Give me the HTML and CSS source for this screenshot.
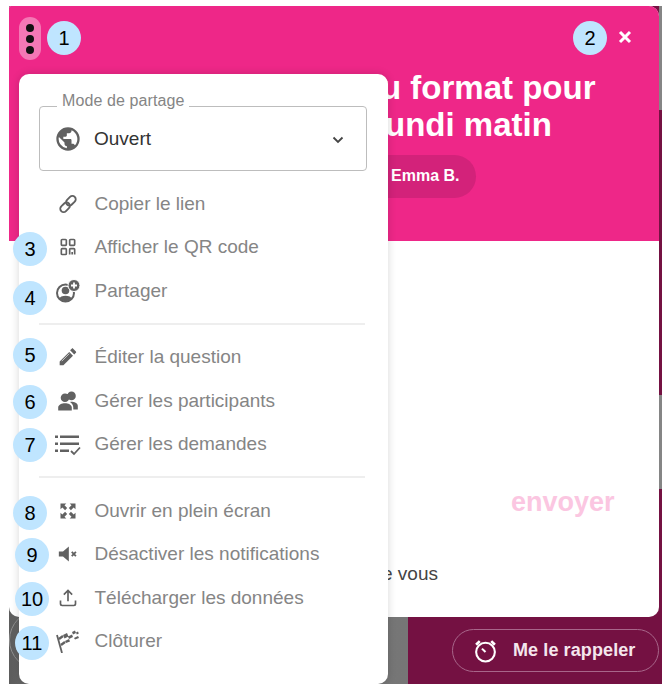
FILE: index.html
```html
<!DOCTYPE html>
<html lang="fr">
<head>
<meta charset="utf-8">
<title>Menu</title>
<link rel="stylesheet" href="styles.css">
</head>
<body>
<div class="stage">
  <div class="backdrop">
    <div class="bg-grey"><div class="ring"></div></div>
    <div class="bg-wine"></div>
    <div class="patch patch-a"></div>
    <div class="patch patch-b"></div>
  </div>
  <button class="remind">
    <svg class="remind-ic" viewBox="0 0 24 24" width="25" height="25"><circle cx="12" cy="13.500" r="9" fill="none" stroke="#fff" stroke-width="2"/><path d="M12 13.500 8.600 10.200" stroke="#fff" stroke-width="2"/><path d="M3 6.500 6.500 3M21 6.500 17.500 3" stroke="#fff" stroke-width="2.600"/></svg>
    Me le rappeler
  </button>

  <section class="card">
    <header class="card-head">
      <h1 class="title"><span class="title-line">u format pour</span><span class="title-line title-line-two">undi matin</span></h1>
      <div class="author">Emma B.</div>
      <svg class="close" viewBox="0 0 14 14" width="14" height="14"><path d="M2 2l10 10M12 2 2 12" stroke="#fff" stroke-width="3"/></svg>
    </header>
    <div class="card-body">
      <div class="send">envoyer</div>
      <div class="vous">e vous</div>
    </div>
  </section>

  <div class="dots"><i></i><i></i><i></i></div>

  <nav class="menu">
    <fieldset class="mode">
      <legend>Mode de partage</legend>
      <svg class="globe" viewBox="0 0 24 24" width="28" height="28"><path fill="#616161" d="M12 2a10 10 0 1 0 0 20 10 10 0 0 0 0-20zm-1 17.900A8 8 0 0 1 4.200 10.200L9 15v1c0 1.100.9 2 2 2v1.900zm6.900-2.500c-.3-.8-1-1.400-1.900-1.400h-1v-3c0-.6-.4-1-1-1H8v-2h2c.6 0 1-.4 1-1V7h2c1.100 0 2-.9 2-2v-.4a8 8 0 0 1 2.900 12.800z"/></svg>
      <span class="mode-label">Ouvert</span>
      <svg class="chev" viewBox="0 0 12 8" width="12" height="8"><path d="M1.500 1.500 6 6l4.500-4.500" fill="none" stroke="#444" stroke-width="1.800"/></svg>
    </fieldset>

    <ul class="group">
      <li class="item"><svg class="ic" viewBox="0 0 24 24"><g fill="none" stroke="#616161" stroke-width="2.200"><rect x="11.500" y="1.500" width="8" height="13" rx="4" transform="rotate(45 15.500 8)"/><rect x="4.500" y="9.500" width="8" height="13" rx="4" transform="rotate(45 8.500 16)"/></g></svg>Copier le lien</li>
      <li class="item"><svg class="ic" viewBox="0 0 24 24"><g fill="none" stroke="#616161" stroke-width="2"><rect x="4" y="3" width="6" height="7" rx="1"/><rect x="14" y="3" width="6" height="7" rx="1"/><rect x="4" y="14" width="6" height="7" rx="1"/><path d="M14 21v-6a1 1 0 0 1 1-1h4a1 1 0 0 1 1 1v6M17 18v3"/></g></svg>Afficher le QR code</li>
      <li class="item"><svg class="ic ic-lg" viewBox="0 0 24 24"><circle cx="9.500" cy="14" r="8.500" fill="none" stroke="#616161" stroke-width="2"/><circle cx="9.500" cy="11.500" r="3.800" fill="#616161"/><path d="M3 20c1-4.500 12-4.500 13 0l-6.500 2.500z" fill="#616161"/><circle cx="18" cy="6.500" r="6" fill="#616161" stroke="#fff"/><path d="M18 3.500v6M15 6.500h6" stroke="#fff" stroke-width="1.800"/></svg>Partager</li>
    </ul>
    <hr class="sep">
    <ul class="group">
      <li class="item"><svg class="ic" viewBox="0 0 24 24"><path fill="#616161" d="M2 17.500V22h4.500L18 10.500 13.500 6zM19.500 9l2-2c.5-.5.5-1.200 0-1.700l-3.300-3.300c-.5-.5-1.200-.5-1.700 0l-2 2z"/><path d="M4.500 17l9-9" stroke="#fff" stroke-width=".8"/></svg>Éditer la question</li>
      <li class="item"><svg class="ic" viewBox="0 0 20 20"><path fill="#616161" d="M13.500 9.200a4.300 4.300 0 1 0 0-8.600 4.300 4.300 0 0 0 0 8.600zM7 11a4.300 4.300 0 1 0 0-8.600A4.300 4.300 0 0 0 7 11zm0 1.300c-3 0-6.800 1.500-6.800 4.200v3h13.600v-3c0-2.700-3.800-4.200-6.800-4.200zm6.500-1.500c-.5 0-1 0-1.500.1 1.700 1 3.300 2.900 3.300 5.600v2h4.500v-3.700c0-2.600-3.800-4-6.300-4z"/></svg>Gérer les participants</li>
      <li class="item"><svg class="ic ic-wide" viewBox="0 0 26 24"><path fill="#616161" d="M0 3.500h3V6H0zM5 3.500h19V6H5zM0 10.500h3V13H0zM5 10.500h19V13H5zM0 17.500h3V20H0zM5 17.500h9V20H5z"/><path d="M16 19l3 3 6-6.500" fill="none" stroke="#616161" stroke-width="1.800"/></svg>Gérer les demandes</li>
    </ul>
    <hr class="sep">
    <ul class="group">
      <li class="item"><svg class="ic" viewBox="0 0 24 24"><path fill="#616161" d="M3 3h7L7.800 5.200l3.200 3.300-2.500 2.500-3.300-3.200L3 10zM21 3v7l-2.200-2.200-3.300 3.200-2.500-2.500 3.200-3.300L14 3zM3 21v-7l2.200 2.200 3.300-3.200 2.500 2.500-3.200 3.300L10 21zM21 21h-7l2.200-2.200-3.200-3.300 2.500-2.500 3.300 3.200L21 14z"/></svg>Ouvrir en plein écran</li>
      <li class="item"><svg class="ic" viewBox="0 0 24 24"><path fill="#616161" d="M1 9v6h5l7 6V3L6 9z"/><path d="M16.500 9.500l5 5M21.500 9.500l-5 5" stroke="#616161" stroke-width="2.200"/></svg>Désactiver les notifications</li>
      <li class="item"><svg class="ic" viewBox="0 0 24 24"><path d="M12 16V3.500M7 8l5-5 5 5M3 15v4a2 2 0 0 0 2 2h14a2 2 0 0 0 2-2v-4" fill="none" stroke="#616161" stroke-width="2"/></svg>Télécharger les données</li>
      <li class="item"><svg class="ic ic-lg" viewBox="0 0 24 24"><path d="M1 6 6 24" stroke="#616161" stroke-width="1.800"/><path d="M3 10l4-3M5 16l4-3" stroke="#616161" stroke-width="2.400"/><path fill="#616161" d="M7 6l4-2 1.500 3.500-4 2zM9 12l4-2-1-2.500 4-2 1 2.500-4 2 1 2.500-4 1.500zM16 3l3-1.500 1 2.500-3 1.500zM18 9l4-2 1 2-4 1.500zM20 3.500l2-1 .8 2-2 1z"/></svg>Clôturer</li>
    </ul>
  </nav>

  <span class="num n1">1</span>
  <span class="num n2">2</span>
  <span class="num n3">3</span>
  <span class="num n4">4</span>
  <span class="num n5">5</span>
  <span class="num n6">6</span>
  <span class="num n7">7</span>
  <span class="num n8">8</span>
  <span class="num n9">9</span>
  <span class="num n10">10</span>
  <span class="num n11">11</span>
</div>
</body>
</html>
```

FILE: styles.css
```css
* { box-sizing: border-box; }
html, body { margin: 0; padding: 0; background: #fff; }
body { font-family: "Liberation Sans", Arial, sans-serif; }
.stage { position: relative; width: 662px; height: 684px; overflow: hidden; }

.backdrop { position: absolute; left: 9px; top: 6px; right: 0; bottom: 0; display: flex; }
.bg-grey { position: relative; width: 399px; overflow: hidden; background: linear-gradient(90deg, #5c5c5c, #7a7a7a 40px, #767676); }
.ring { position: absolute; left: 0; top: 604px; width: 60px; height: 60px; border-radius: 50%; border: 1px solid #8f8f8f; }
.bg-wine { flex: 1; background: #741142; }
.patch { position: absolute; right: 0; width: 3px; background: #858585; }
.patch-a { top: 0; height: 104px; }
.patch-b { top: 389px; height: 94px; }

.remind { position: absolute; left: 452px; top: 629px; width: 207px; height: 43px; display: flex; align-items: center; justify-content: flex-start; gap: 15px; padding: 0 0 0 20px; background: transparent; border: 1px solid #a8668a; border-radius: 22px; color: #f4e6ed; font: 700 18px "Liberation Sans", sans-serif; letter-spacing: .1px; }

.card { position: absolute; left: 9px; top: 6px; width: 650px; height: 611px; border-radius: 2px 10px 10px 10px; overflow: hidden; background: #fff; display: flex; flex-direction: column; }
.card-head { position: relative; height: 235px; background: #ee2788; color: #fff; padding: 63px 0 0 372px; }
.title { margin: 0; font-size: 33px; line-height: 37px; font-weight: 700; }
.title-line { display: block; white-space: nowrap; }
.title-line-two { padding-left: 4px; }
.author { width: 120px; height: 43px; margin: 12px 0 0 -25px; padding: 0 0 0 35px; border-radius: 22px; background: #d3227a; font-size: 16px; font-weight: 700; line-height: 41px; }
.close { position: absolute; left: 609px; top: 24px; }
.card-body { position: relative; flex: 1; }
.send { position: absolute; left: 502px; top: 246px; color: #fbc6e1; font-size: 27px; font-weight: 700; }
.vous { position: absolute; left: 373px; top: 322px; color: #444; font-size: 19px; }

.dots { position: absolute; left: 19px; top: 17px; width: 22px; height: 43px; border-radius: 11px; background: #f478b5; display: flex; flex-direction: column; align-items: center; justify-content: center; gap: 3px; }
.dots i { width: 8px; height: 8px; border-radius: 50%; background: #111; }

.menu { position: absolute; left: 19px; top: 74px; width: 369px; height: 610px; background: #fff; border-radius: 10px; box-shadow: 0 0 8px rgba(0,0,0,.16); padding: 24px 20px 0; }
.mode { position: relative; margin: 0; padding: 0 0 0 16px; width: 328px; height: 73px; border: 1px solid #bdbdbd; border-radius: 4px; display: flex; align-items: center; }
.mode legend { position: relative; top: -6px; margin-left: 1px; padding: 0 5px; color: #858585; font-size: 16px; line-height: 17px; letter-spacing: .1px; }
.globe { flex: none; margin-top: -8px; margin-left: -2px; }
.mode-label { margin: -8px 0 0 12px; color: #333; font-size: 19px; }
.chev { margin: -6px 0 0 auto; position: relative; right: 22px; }

.group { list-style: none; margin: 0; padding: 0; }
.mode + .group { margin-top: 11px; }
.item { display: flex; align-items: center; height: 43.500px; padding-left: 16px; color: #858585; font-size: 19px; white-space: nowrap; }
.ic { flex: none; width: 20px; height: 20px; margin: 0 16.500px 0 3px; }
.ic-lg { width: 24px; height: 24px; margin: 0 14.500px 0 1px; }
.ic-wide { width: 26px; height: 24px; margin: 0 13.500px 0 0; }
.sep { margin: 10px 0 11px; width: 326px; border: 0; border-top: 2px solid #eee; }

.num { position: absolute; width: 34px; height: 34px; border-radius: 50%; background: #bfe5ff; color: #000; font-size: 20px; line-height: 34px; text-align: center; }
.n1 { left: 47px; top: 21px; }
.n2 { left: 573px; top: 21px; }
.n3 { left: 13px; top: 232px; }
.n4 { left: 13px; top: 281px; }
.n5 { left: 13px; top: 338px; }
.n6 { left: 13px; top: 385px; }
.n7 { left: 13px; top: 428px; }
.n8 { left: 13px; top: 496px; }
.n9 { left: 15px; top: 538px; }
.n10 { left: 15px; top: 582px; }
.n11 { left: 15px; top: 626px; }
```
